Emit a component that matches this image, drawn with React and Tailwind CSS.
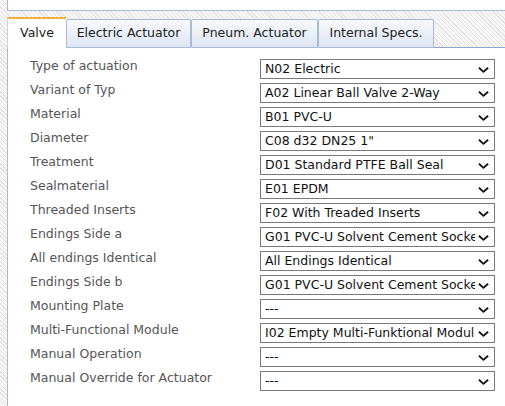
import React from 'react';

const rows = [
  ['Type of actuation', 'N02 Electric'],
  ['Variant of Typ', 'A02 Linear Ball Valve 2-Way'],
  ['Material', 'B01 PVC-U'],
  ['Diameter', 'C08 d32 DN25 1"'],
  ['Treatment', 'D01 Standard PTFE Ball Seal'],
  ['Sealmaterial', 'E01 EPDM'],
  ['Threaded Inserts', 'F02 With Treaded Inserts'],
  ['Endings Side a', 'G01 PVC-U Solvent Cement Socket'],
  ['All endings Identical', 'All Endings Identical'],
  ['Endings Side b', 'G01 PVC-U Solvent Cement Socket'],
  ['Mounting Plate', '---'],
  ['Multi-Functional Module', 'I02 Empty Multi-Funktional Module'],
  ['Manual Operation', '---'],
  ['Manual Override for Actuator', '---'],
];

const tabs = [
  { label: 'Electric Actuator', w: 'w-[125px]' },
  { label: 'Pneum. Actuator', w: 'w-[127px]' },
  { label: 'Internal Specs.', w: 'w-[116px]' },
];

const Chevron = () => (
  <svg viewBox="0 0 12 8" className="absolute right-[5px] top-[6px] w-[11px] h-[8px] pointer-events-none">
    <path d="M1 1.5 L6 6 L11 1.5" fill="none" stroke="#111" strokeWidth="2" />
  </svg>
);

// looks like a native dropdown, text is just clipped under the arrow
const Select = ({ value }) => (
  <div className="relative w-[235px] h-[20px] border border-[#7a7a7a] bg-white">
    <div className="h-[18px] mr-[19px] pl-[4px] overflow-hidden whitespace-nowrap text-[12.5px] leading-[18px] text-[#111]">
      {value}
    </div>
    <Chevron />
  </div>
);

export default function App() {
  return (
    <div className="w-[505px] h-[406px] overflow-hidden pl-[7px] bg-[repeating-linear-gradient(45deg,#e4e4e4_0px,#e4e4e4_1px,#f7f7f7_1px,#f7f7f7_3px)] font-['DejaVu_Sans',sans-serif]">
      <div className="h-[11px] bg-white border-l border-b border-[#a9bad5]" />
      <div className="flex items-end h-[37px] pt-[6px]">
        <div className="w-[59px] h-[31px] bg-white border-t-2 border-t-[#f0b040] border-l border-l-[#c9d3e2] flex items-center justify-center text-[12.5px] text-[#222]">
          Valve
        </div>
        {tabs.map((t) => (
          <div
            key={t.label}
            className={`${t.w} h-[29px] border border-[#a9bad5] rounded-t-[2px] bg-[linear-gradient(#f8f9fc,#dde5f2)] flex items-center justify-center text-[12.5px] text-[#222] pb-[1px]`}
          >
            {t.label}
          </div>
        ))}
        <div className="flex-1 border-b border-[#8ea6cc]" />
      </div>
      <div className="h-[358px] bg-white border-l border-[#a9bad5] pl-[22px] pt-[11px] flex flex-col gap-[4px]">
        {rows.map(([label, value]) => (
          <div key={label} className="flex items-start h-[20px]">
            <div className="w-[230px] text-[12.5px] leading-[14px] text-[#555]">{label}</div>
            <Select value={value} />
          </div>
        ))}
      </div>
    </div>
  );
}
